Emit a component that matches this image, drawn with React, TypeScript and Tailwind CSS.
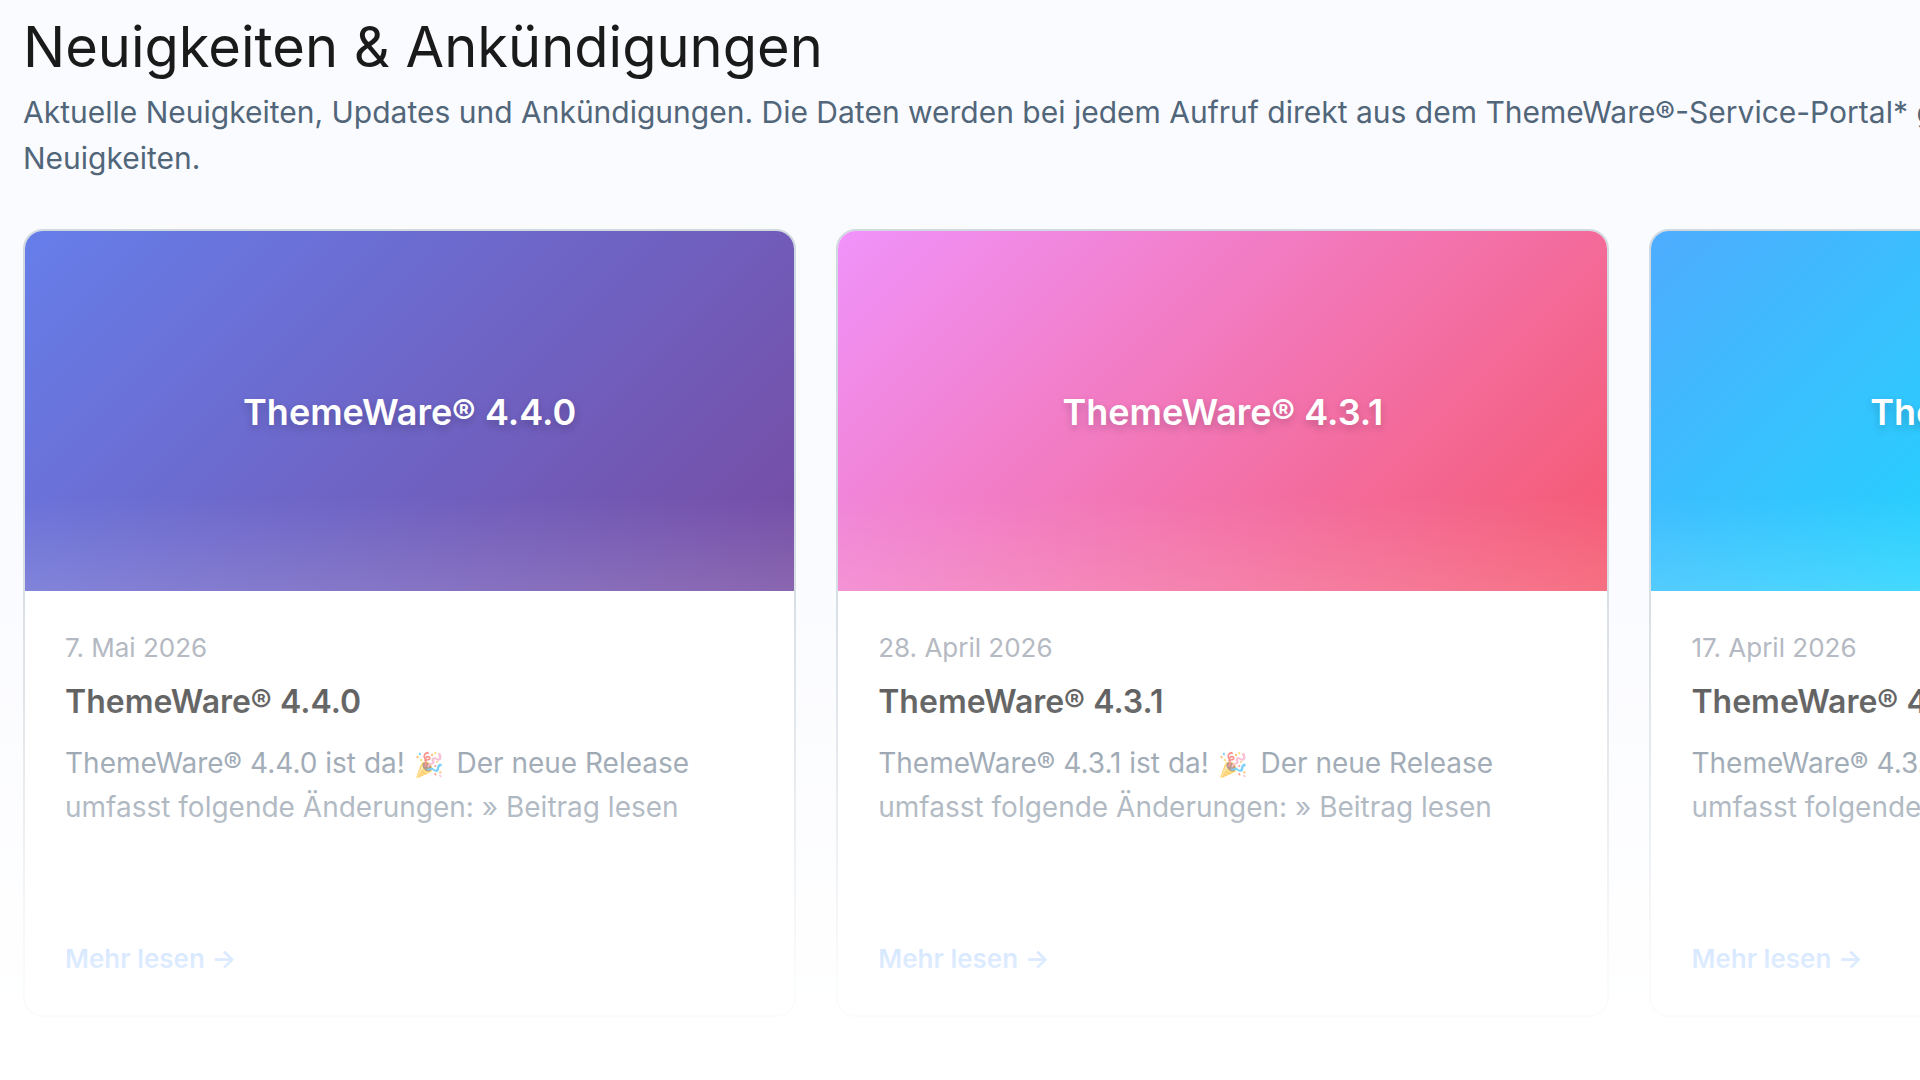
import { clsx } from "clsx";

const posts = [
  {
    title: "ThemeWare® 4.4.0",
    date: "7. Mai 2026",
    banner: "bg-[linear-gradient(135deg,#667eea_0%,#764ba2_100%)]",
  },
  {
    title: "ThemeWare® 4.3.1",
    date: "28. April 2026",
    banner: "bg-[linear-gradient(135deg,#f093fb_0%,#f5576c_100%)]",
  },
  {
    title: "ThemeWare® 4.3.0",
    date: "17. April 2026",
    banner: "bg-[linear-gradient(135deg,#4facfe_0%,#00f2fe_100%)]",
  },
];

type Post = (typeof posts)[number];

function NewsCard({ post }: { post: Post }) {
  return (
    <article className="flex flex-col overflow-hidden rounded-[20px] border-2 border-[#d1d9e0] bg-white">
      <div className={clsx("flex h-[360px] items-center justify-center pt-0.5", post.banner)}>
        <span className="text-[36px] font-semibold text-white [text-shadow:0_4px_8px_rgba(0,0,0,0.2)]">
          {post.title}
        </span>
      </div>

      <div className="flex flex-1 flex-col px-10 pt-[41px] pb-10">
        <time className="text-[26px] leading-8 text-[#9ca3af]">{post.date}</time>
        <h2 className="mt-4 text-[32px] leading-11 font-semibold text-[#1a1a1a]">{post.title}</h2>
        <p className="mt-[17px] min-h-[194px] text-[28px] leading-11 text-[#52667a]">
          {post.title} ist da! <span className="mr-1 ml-0.5 text-[24px] leading-none">🎉</span> Der neue Release
          umfasst folgende Änderungen: » Beitrag lesen
        </p>
        <a href="#" className="mt-2 self-start text-[26px] leading-8 font-semibold text-[#0870ff]">
          Mehr lesen →
        </a>
      </div>
    </article>
  );
}

export default function App() {
  return (
    <main className="relative min-h-screen overflow-hidden bg-[#fafbff] pl-[23px] font-['Inter','Noto_Color_Emoji',sans-serif]">
      <div className="w-[126.5%]">
        <h1 className="pt-3 text-[56px] leading-[70px] text-[#1a1a1a]">Neuigkeiten &amp; Ankündigungen</h1>
        <p className="mt-[7px] text-[30px] leading-[46px] text-[#52667a]">
          Aktuelle Neuigkeiten, Updates und Ankündigungen. Die Daten werden bei jedem Aufruf direkt aus dem
          ThemeWare®-Service-Portal* geladen und zeigen die
          <br />
          Neuigkeiten.
        </p>
        <div className="mt-12 grid grid-cols-3 gap-10">
          {posts.map((post) => (
            <NewsCard key={post.title} post={post} />
          ))}
        </div>
      </div>

      {/* Fade out towards the bottom */}
      <div className="pointer-events-none absolute inset-0 bg-[linear-gradient(to_bottom,rgba(255,255,255,0)_46%,rgba(255,255,255,0.33)_65%,rgba(255,255,255,0.56)_75%,rgba(255,255,255,0.86)_89%,#fff_100%)]" />
    </main>
  );
}
